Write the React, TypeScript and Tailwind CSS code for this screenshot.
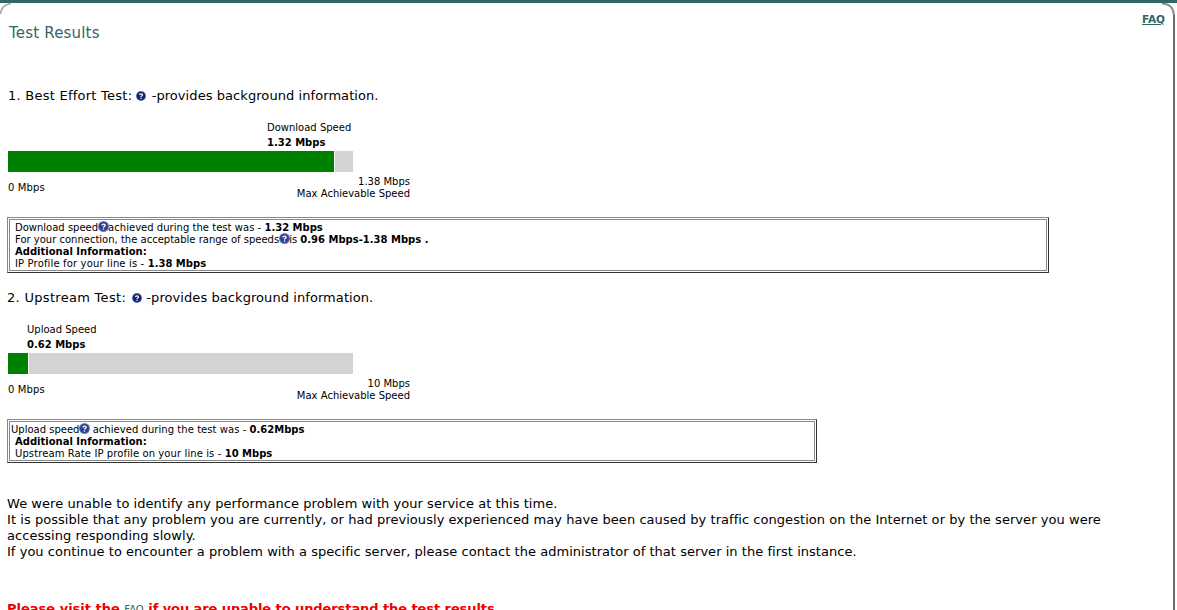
const HelpIcon = ({ small = false }: { small?: boolean }) => (
  <svg
    width={small ? 11 : 10}
    height={small ? 11 : 10}
    viewBox="0 0 10 10"
    className={small ? "inline-block align-[-1px] -mx-[0.5px] -mt-[2px]" : "inline-block align-[-1px]"}
  >
    <circle cx="5" cy="5" r="5" fill={small ? "#6f7fc4" : "#5d6aa8"} />
    <circle cx="5" cy="5" r="4.1" fill={small ? "#2f3f96" : "#16246f"} />
    <path d="M3.5 4 C3.6 2.5 6.6 2.5 6.5 4 C6.4 4.9 5 4.9 5 6" fill="none" stroke="#ffffff" strokeWidth="1.2" />
    <rect x="4.4" y="6.7" width="1.2" height="1.2" fill="#ffffff" />
  </svg>
)

const SpeedBar = ({ label, value, done, max, labelPad }: { label: string; value: string; done: number; max: string; labelPad: string }) => (
  <div className="w-[402px] text-[10px]">
    <div className={`${labelPad} leading-[15px] h-[30px]`}>
      <div>{label}</div>
      <div className="font-bold">{value}</div>
    </div>
    <div className="flex w-[345px] h-[21px] mt-[1px] bg-[#d3d2d4]">
      <div className="bg-[#008000] h-full border-r border-white box-content" style={{ width: done }} />
    </div>
    <div className="flex items-center justify-between mt-[4px] leading-[12px]">
      <span className="tracking-[0.15px]">0 Mbps</span>
      <div className="text-right">
        <div>{max}</div>
        <div>Max Achievable Speed</div>
      </div>
    </div>
  </div>
)

export default function App() {
  return (
    <div className="h-[610px] overflow-hidden bg-white font-['DejaVu_Sans',Verdana,sans-serif] text-black">
      <div className="h-[3px] bg-[#336666]" />
      <div className="relative h-[640px] mr-[2px] border-r-2 border-[#6a6a6a] pl-[8px] pr-[8px]">
        <svg width="14" height="12" viewBox="0 0 14 12" className="absolute left-0 top-0">
          <path d="M0.5 11 Q1.5 1.5 11 0.5" fill="none" stroke="#a8a8a8" strokeWidth="1.6" />
        </svg>
        <svg width="14" height="12" viewBox="0 0 14 12" className="absolute -right-[2px] top-0">
          <rect width="14" height="12" fill="#ffffff" />
          <path d="M1 0.6 Q12 0.5 13 12" fill="none" stroke="#8a8a8a" strokeWidth="2" />
        </svg>

        <div className="flex justify-between items-start">
          <h1 className="text-[15px] leading-[18px] tracking-[0.18px] text-[#336666] mt-[21px] ml-[1px]">Test Results</h1>
          <a className="text-[10.5px] font-bold underline text-[#2f6666] mt-[9px]">FAQ</a>
        </div>

        <p className="text-[13px] leading-[16px] mt-[46px]">
          <span className="tracking-[0.25px]">1. Best Effort Test:</span> <HelpIcon /> <span className="ml-[1px] tracking-[0.07px]">-provides background information.</span>
        </p>
        <div className="mt-[16px]">
          <SpeedBar label="Download Speed" value="1.32 Mbps" done={326} max="1.38 Mbps" labelPad="pl-[259px]" />
        </div>

        <div className="mt-[17px] -ml-[1px] w-[1042px] h-[56px] border border-[#888] border-r-[#333] border-b-[#333] p-[1px]">
          <div className="h-full border border-[#888] px-[5px] pt-[2px] text-[10px] leading-[12px]">
            <div>Download speed<HelpIcon small /><span className="tracking-[0.03px]">achieved during the test was - </span><b>1.32 Mbps</b></div>
            <div>For your connection, the acceptable range of speeds<HelpIcon small />is <b>0.96 Mbps-1.38 Mbps .</b></div>
            <div className="font-bold">Additional Information:</div>
            <div><span className="tracking-[0.15px]">IP Profile for your line is - </span><b>1.38 Mbps</b></div>
          </div>
        </div>

        <p className="text-[13px] leading-[16px] mt-[17px] -ml-[1px]">
          <span className="tracking-[0.3px]">2. Upstream Test:</span> <span className="ml-[2px]"><HelpIcon /></span> <span className="tracking-[0.07px]">-provides background information.</span>
        </p>
        <div className="mt-[16px]">
          <SpeedBar label="Upload Speed" value="0.62 Mbps" done={20} max="10 Mbps" labelPad="pl-[19px]" />
        </div>

        <div className="mt-[17px] -ml-[1px] w-[810px] h-[44px] border border-[#888] border-r-[#333] border-b-[#333] p-[1px]">
          <div className="h-full border border-[#888] pt-[2px] text-[10px] leading-[12px]">
            <div className="pl-[1px]">Upload speed<HelpIcon small /> <span className="tracking-[0.05px]">achieved during the test was - </span><b>0.62Mbps</b></div>
            <div className="pl-[5px] font-bold">Additional Information:</div>
            <div className="pl-[5px]"><span className="tracking-[0.1px]">Upstream Rate IP profile on your line is - </span><b>10 Mbps</b></div>
          </div>
        </div>

        <div className="mt-[33px] -ml-[1px] text-[13px] leading-[16px] tracking-[0.05px] w-[1140px]">
          <p>We were unable to identify any performance problem with your service at this time.</p>
          <p>It is possible that any problem you are currently, or had previously experienced may have been caused by traffic congestion on the Internet or by the server you were accessing responding slowly.</p>
          <p className="tracking-[0.035px]">If you continue to encounter a problem with a specific server, please contact the administrator of that server in the first instance.</p>
        </div>

        <p className="mt-[41px] -ml-[1px] text-[13px] leading-[16px] font-bold text-[#ee0000]">
          Please visit the <a className="text-[10px] font-normal text-[#2f6666]">FAQ</a> <span className="tracking-[-0.08px]">if you are unable to understand the test results</span>
        </p>
      </div>
    </div>
  )
}
